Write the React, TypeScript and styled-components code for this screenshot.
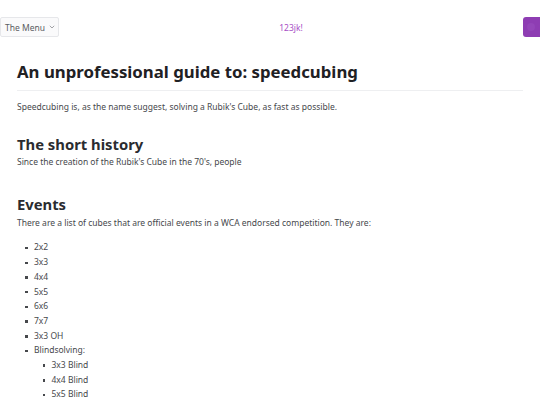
import React from "react";
import styled, { createGlobalStyle } from "styled-components";

const Global = createGlobalStyle`
  html, body { margin: 0; padding: 0; background: #ffffff; overflow-x: hidden; }
  body { font-family: "Noto Sans", "Open Sans", sans-serif; }
`;

const Header = styled.header`
  display: flex;
  align-items: center;
  justify-content: space-between;
  padding-top: 17px;
  height: 20px;
`;

const MenuButton = styled.button`
  display: flex;
  align-items: center;
  gap: 4px;
  height: 20px;
  width: 59px;
  box-sizing: border-box;
  padding: 0 0 0 4px;
  border: 1px solid #e6e7ea;
  border-radius: 2px;
  background: #fafafb;
  color: #5b5d62;
  font-family: "Noto Sans", sans-serif;
  font-size: 8.5px;
  white-space: nowrap;
`;

const Brand = styled.span`
  color: #a84fc6;
  font-size: 8.5px;
`;

const Avatar = styled.div`
  width: 17px;
  height: 20px;
  border-radius: 3px 0 0 3px;
  background: #8e3db3;
  display: flex;
  align-items: center;
  justify-content: center;
`;

const AvatarDot = styled.span`
  width: 8px;
  height: 8px;
  border-radius: 50%;
  background: #9446b9;
`;

const Main = styled.main`
  padding: 0 17px;
  color: #46484c;
`;

const Title = styled.h1`
  margin: 25px 0 0;
  padding-bottom: 8px;
  border-bottom: 1px solid #eeeff1;
  font-size: 16.8px;
  line-height: 20.2px;
  font-weight: 700;
  color: #1f2124;
`;

const Heading = styled.h2<{ $top: number }>`
  margin: ${(p) => p.$top}px 0 0;
  font-size: 14.8px;
  line-height: 17.8px;
  font-weight: 700;
  color: #2a2c30;
`;

const Para = styled.p<{ $top: number }>`
  margin: ${(p) => p.$top}px 0 0;
  font-size: 8.5px;
  line-height: 12px;
`;

const List = styled.ul<{ $top: number; $indent: number }>`
  margin: ${(p) => p.$top}px 0 0;
  padding-left: ${(p) => p.$indent}px;
  list-style: none;
  font-size: 8.5px;
  line-height: 14.7px;
`;

const Item = styled.li`
  &::before {
    content: "";
    display: inline-block;
    width: 2.5px;
    height: 2.5px;
    margin-right: 6.5px;
    vertical-align: middle;
    background: #46484c;
  }
`;

const Chevron = () => (
  <svg width="6" height="4" viewBox="0 0 6 4" fill="none">
    <path d="M0.8 0.8 L3 3 L5.2 0.8" stroke="#8b8d92" strokeWidth="0.8" />
  </svg>
);

export default function App() {
  return (
    <>
      <Global />
      <Header>
        <MenuButton>
          The Menu <Chevron />
        </MenuButton>
        <Brand>123jk!</Brand>
        <Avatar>
          <AvatarDot />
        </Avatar>
      </Header>
      <Main>
        <Title>An unprofessional guide to: speedcubing</Title>
        <Para $top={10}>
          Speedcubing is, as the name suggest, solving a Rubik's Cube, as fast as possible.
        </Para>
        <Heading $top={23}>The short history</Heading>
        <Para $top={2}>Since the creation of the Rubik's Cube in the 70's, people</Para>
        <Heading $top={28}>Events</Heading>
        <Para $top={3}>
          There are a list of cubes that are official events in a WCA endorsed competition. They are:
        </Para>
        <List $top={11.6} $indent={8}>
          <Item>2x2</Item>
          <Item>3x3</Item>
          <Item>4x4</Item>
          <Item>5x5</Item>
          <Item>6x6</Item>
          <Item>7x7</Item>
          <Item>3x3 OH</Item>
          <Item>
            Blindsolving:
            <List $top={0} $indent={17.5}>
              <Item>3x3 Blind</Item>
              <Item>4x4 Blind</Item>
              <Item>5x5 Blind</Item>
            </List>
          </Item>
        </List>
      </Main>
    </>
  );
}
